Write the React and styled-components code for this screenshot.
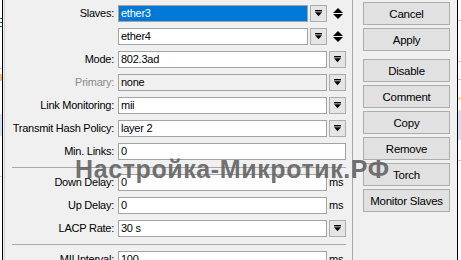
import React from "react";
import styled, { createGlobalStyle } from "styled-components";

const GlobalStyle = createGlobalStyle`
  html, body { margin: 0; padding: 0; }
  body { background: #ffffff; font-family: "Liberation Sans", Arial, sans-serif; }
  #root { width: 461px; height: 260px; overflow: hidden; }
`;

const Screen = styled.div`
  position: relative;
  display: flex;
  width: 461px;
  height: 260px;
  overflow: hidden;
  font-family: "Liberation Sans", Arial, sans-serif;
  font-size: 11px;
  letter-spacing: -0.25px;
  color: #000;
  background: #fff;
`;

const Backdrop = styled.div`
  flex: none;
  width: ${(p) => p.$w}px;
  height: 100%;
  display: flex;
  flex-direction: column;
  background: #fff;
`;

const Mark = styled.div`
  flex: none;
  height: ${(p) => p.$h}px;
  background: ${(p) => p.$c || "transparent"};
`;

const Window = styled.div`
  flex: none;
  box-sizing: border-box;
  width: 456px;
  height: 100%;
  display: flex;
  border-left: 1px solid #000;
  border-right: 1px solid #000;
  background: #f0f0f0;
`;

const Panel = styled.div`
  flex: none;
  box-sizing: border-box;
  width: 349px;
  height: 100%;
  margin-left: 1px;
  padding: 5px 6px 0 0;
  border-left: 1px solid #d4d4d4;
  border-right: 1px solid #a8a8a8;
  background: #f0f0f0;
`;

const Section = styled.div`
  display: grid;
  grid-template-columns: 109px 228px;
  column-gap: 4px;
  row-gap: 6px;
`;

const Separator = styled.div`
  height: 1px;
  margin: 7px 0 6px 7px;
  background: #a9a9a9;
`;

const Label = styled.div`
  height: 17px;
  line-height: 17px;
  text-align: right;
  white-space: nowrap;
  color: ${(p) => (p.$disabled ? "#8a8a8a" : "#000")};
`;

const Field = styled.div`
  display: flex;
  gap: 2px;
  height: 17px;
`;

const Box = styled.div`
  flex: 1;
  min-width: 0;
  box-sizing: border-box;
  height: 17px;
  padding: 0 2px;
  border: 1px solid #a3a3a3;
  line-height: 15px;
  white-space: nowrap;
  overflow: hidden;
  background: ${(p) => (p.$selected ? "#0078d7" : p.$disabled ? "#f0f0f0" : "#fff")};
  color: ${(p) => (p.$selected ? "#fff" : "#000")};
`;

const DropButton = styled.div`
  flex: none;
  box-sizing: border-box;
  width: 17px;
  height: 17px;
  border: 1px solid #adadad;
  background: #e5e5e5;
  display: flex;
  align-items: center;
  justify-content: center;
`;

const Spinner = styled.div`
  flex: none;
  width: 17px;
  height: 17px;
  display: flex;
  align-items: center;
  justify-content: center;
`;

const Unit = styled.div`
  flex: none;
  width: 17px;
  line-height: 17px;
`;

const ButtonColumn = styled.div`
  flex: none;
  width: 87px;
  margin-left: 10px;
  padding-top: 2px;
  display: flex;
  flex-direction: column;
  gap: 3px;
`;

const ActionButton = styled.button`
  box-sizing: border-box;
  width: 87px;
  height: 23px;
  margin: 0 0 ${(p) => (p.$groupEnd ? 5 : 0)}px 0;
  padding: 0;
  border: 1px solid #adadad;
  border-radius: 0;
  background: #e1e1e1;
  font: inherit;
  font-size: 11.5px;
  letter-spacing: inherit;
  color: #000;
  text-align: center;
`;

const Watermark = styled.div`
  position: absolute;
  left: 75px;
  top: 157px;
  font-family: "Liberation Sans", Arial, sans-serif;
  font-weight: bold;
  font-size: 25px;
  line-height: 25px;
  letter-spacing: 0.6px;
  color: rgba(95, 95, 95, 0.9);
  white-space: nowrap;
  pointer-events: none;
`;

const DropIcon = () => (
  <svg width="7" height="7" viewBox="0 0 7 7">
    <rect x="0" y="0" width="7" height="1.4" fill="#000" />
    <polygon points="0,2.3 7,2.3 3.5,6.3" fill="#000" />
  </svg>
);

const SpinIcon = () => (
  <svg width="10" height="11" viewBox="0 0 10 11">
    <polygon points="0,5 10,5 5,0" fill="#000" />
    <polygon points="0,6 10,6 5,11" fill="#000" />
  </svg>
);

const Combo = ({ value, disabled }) => (
  <Field>
    <Box $disabled={disabled}>{value}</Box>
    <DropButton>
      <DropIcon />
    </DropButton>
  </Field>
);

const SlaveField = ({ value, selected }) => (
  <Field>
    <Box $selected={selected}>{value}</Box>
    <DropButton>
      <DropIcon />
    </DropButton>
    <Spinner>
      <SpinIcon />
    </Spinner>
  </Field>
);

const UnitField = ({ value, unit }) => (
  <Field>
    <Box>{value}</Box>
    <Unit>{unit}</Unit>
  </Field>
);

const TextField = ({ value }) => (
  <Field>
    <Box>{value}</Box>
  </Field>
);

const leftMarks = [
  [18, ""], [1, "#2f6464"], [3, ""], [1, "#2f6464"], [3, ""], [1, "#2f6464"],
  [41, ""], [1, "#c8c8c8"], [5, ""], [7, "#f3c27a"], [33, ""],
  [22, "#cfe3f5"], [40, ""], [1, "#c8c8c8"], [60, ""],
];

const rightMarks = [
  [20, ""], [1, "#c8c8c8"], [40, ""], [1, "#c8c8c8"], [17, ""], [1, "#c8c8c8"],
  [17, ""], [3, "#f7e38a"], [10, ""], [30, "#cfe3f5"], [20, ""], [1, "#c8c8c8"],
];

const buttons = [
  ["Cancel", false],
  ["Apply", true],
  ["Disable", false],
  ["Comment", false],
  ["Copy", false],
  ["Remove", false],
  ["Torch", false],
  ["Monitor Slaves", false],
];

export default function App() {
  return (
    <>
      <GlobalStyle />
      <Screen>
        <Backdrop $w={2}>
          {leftMarks.map(([h, c], i) => (
            <Mark key={i} $h={h} $c={c} />
          ))}
        </Backdrop>
        <Window>
          <Panel>
            <Section>
              <Label>Slaves:</Label>
              <SlaveField value="ether3" selected />
              <Label />
              <SlaveField value="ether4" />
              <Label>Mode:</Label>
              <Combo value="802.3ad" />
              <Label $disabled>Primary:</Label>
              <Combo value="none" disabled />
              <Label>Link Monitoring:</Label>
              <Combo value="mii" />
              <Label>Transmit Hash Policy:</Label>
              <Combo value="layer 2" />
              <Label>Min. Links:</Label>
              <TextField value="0" />
            </Section>
            <Separator />
            <Section>
              <Label>Down Delay:</Label>
              <UnitField value="0" unit="ms" />
              <Label>Up Delay:</Label>
              <UnitField value="0" unit="ms" />
              <Label>LACP Rate:</Label>
              <Combo value="30 s" />
            </Section>
            <Separator />
            <Section>
              <Label>MII Interval:</Label>
              <UnitField value="100" unit="ms" />
            </Section>
          </Panel>
          <ButtonColumn>
            {buttons.map(([t, end]) => (
              <ActionButton key={t} $groupEnd={end}>
                {t}
              </ActionButton>
            ))}
          </ButtonColumn>
        </Window>
        <Backdrop $w={3}>
          {rightMarks.map(([h, c], i) => (
            <Mark key={i} $h={h} $c={c} />
          ))}
        </Backdrop>
        <Watermark>Настройка-Микротик.РФ</Watermark>
      </Screen>
    </>
  );
}
